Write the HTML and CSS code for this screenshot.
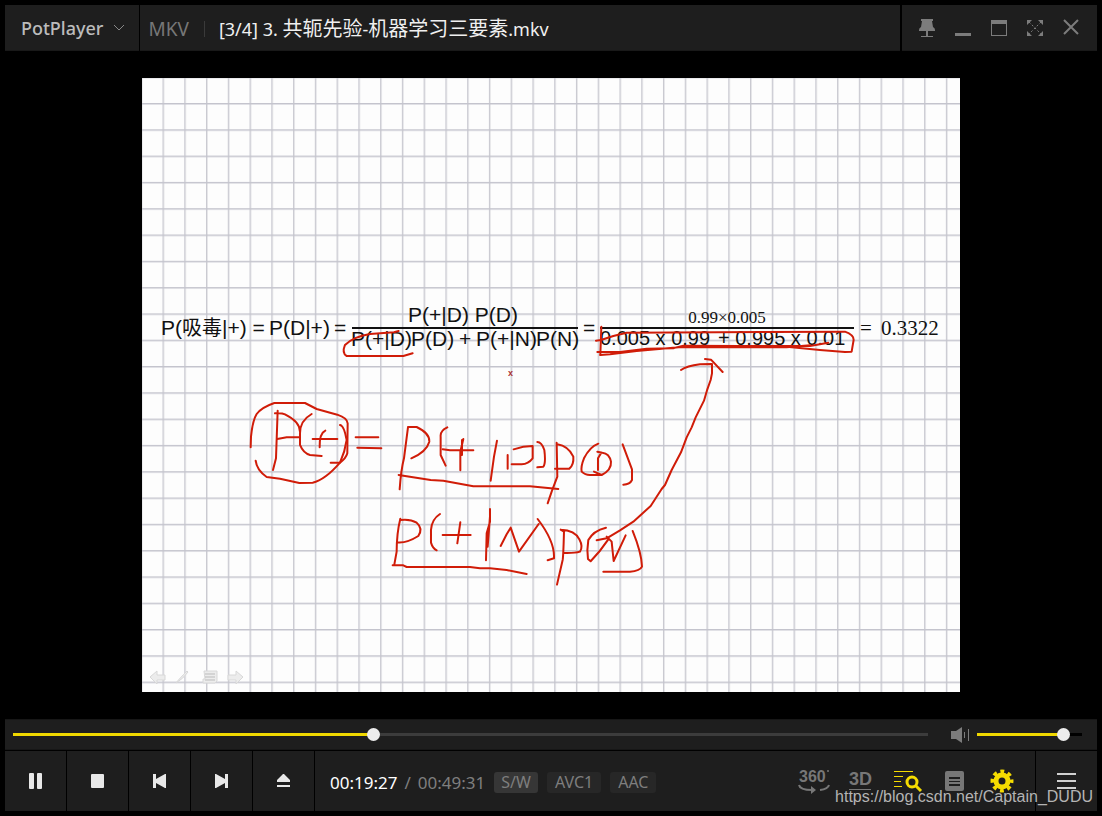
FILE: index.html
```html
<!DOCTYPE html>
<html lang="zh-CN">
<head>
<meta charset="utf-8">
<meta name="viewport" content="width=device-width, initial-scale=1">
<title>PotPlayer</title>
<link rel="stylesheet" href="styles.css">
</head>
<body>
<div class="player">
  <header class="titlebar">
    <button class="brand" type="button">
      <span>PotPlayer</span>
      <svg class="brand-arrow" viewBox="0 0 12 8" aria-hidden="true"><path d="M1 1l5 5 5-5"/></svg>
    </button>
    <div class="caption">
      <span class="format">MKV</span>
      <h1 class="filename">[3/4] 3. <span class="han">共轭先验</span>-<span class="han">机器学习三要素</span>.mkv</h1>
    </div>
    <div class="window-buttons">
      <button type="button" aria-label="Always on top"><svg viewBox="0 0 18 20"><path class="solid" d="M3 1h12v2h-1l1 6q2 1 2 3v1H1v-1q0-2 2-3l1-6H3zM8 13h2v5H8zM3 18h12v1H3z"/></svg></button>
      <button type="button" aria-label="Minimize"><svg viewBox="0 0 18 20"><path class="solid" d="M1 15h16v3H1z"/></svg></button>
      <button type="button" aria-label="Maximize"><svg viewBox="0 0 18 20"><path class="solid" fill-rule="evenodd" d="M1 2h16v16H1zM2 6v11h14V6z"/></svg></button>
      <button type="button" aria-label="Full screen"><svg viewBox="0 0 18 20"><path class="solid" d="M1 2h5L1 7zM17 2v5l-5-5zM1 18v-5l5 5zM17 18h-5l5-5z"/><path class="line dashed" d="M3 4l12 12M15 4L3 16"/></svg></button>
      <button type="button" aria-label="Close"><svg viewBox="0 0 18 20"><path class="line" d="M2 2l14 14M16 2L2 16"/></svg></button>
    </div>
  </header>

  <main class="video">
    <svg class="frame" viewBox="0 0 818 614" role="img" aria-label="共轭先验">
      <defs>
        <pattern id="grid" x="20.5" y="25" width="21.76" height="26.3" patternUnits="userSpaceOnUse">
          <path class="grid-line" d="M.75 0V26.3M0 .75H21.76"/>
        </pattern>
      </defs>
      <rect class="paper" width="818" height="614"/>
      <rect fill="url(#grid)" width="818" height="614"/>

      <g class="slide-nav">
        <path d="M8 599l7-6v4h8v5h-8v4z"/>
        <path d="M34 605q3-4 11-12l1 1q-5 7-12 11z"/>
        <path d="M62 593h13v10l-2 2H61v-4h2z"/>
        <path class="nav-lines" d="M63 596h10M63 599h10M63 602h10"/>
        <path d="M101 599l-7-6v4h-8v5h8v4z"/>
      </g>

      <g class="formula">
        <text x="19" y="257">P(<tspan class="hanzi">吸毒</tspan>|+) = <tspan x="127">P(D|+)</tspan><tspan x="192">=</tspan></text>
        <text x="266" y="244">P(+|D) P(D)</text>
        <text x="209" y="268">P(+|D)<tspan x="269">P(D)</tspan><tspan x="317">+</tspan><tspan x="334">P(+|N)</tspan><tspan x="394">P(N)</tspan></text>
        <text x="441" y="257">=</text>
        <text class="serif-small" x="585" y="245" text-anchor="middle">0.99×0.005</text>
        <text class="product" x="458" y="267">0.005 x 0.99 <tspan x="576">+ 0.995 x 0.01</tspan></text>
        <text class="serif" x="718" y="257">= <tspan x="739">0.3322</tspan></text>
        <path class="bar" d="M210 250H436M458 250H712"/>
        <text class="pointer" x="366" y="298">x</text>
      </g>

      <g class="ink">
        <g transform="translate(-2 212) scale(.3333)">
          <path d="M776 123L762 127L690 132Q640 140 615 165Q605 190 620 198H790L818 190"/>
        </g>
        <g transform="translate(358 212) scale(.3333)">
          <path d="M304 110L301 195M288 152L303 150L340 138L380 128L1035 125Q1062 135 1061 150L1055 185L1035 186L960 180L860 170"/>
          <path d="M292 186L360 186L440 176L520 175L550 167L720 168L930 168L985 158M301 195L330 193L410 183L545 171L860 172L930 166"/>
        </g>
        <g transform="translate(98 312) scale(.3333)">
          <path d="M32 172L33 140Q38 90 50 72Q65 52 103 39H195L230 57L292 74Q322 84 323 100L322 190Q318 205 300 218Q255 270 218 278L178 279L120 266L80 261Q50 240 47 212"/>
          <path d="M113 62L108 205L99 240M105 70Q125 68 135 73Q180 95 180 125M112 147L140 142H180"/>
          <path d="M215 72Q180 92 180 130V165Q190 190 210 195L245 198M218 147H292M256 122Q238 130 239 172M300 105Q312 106 320 150Q315 185 300 218H272"/>
          <path d="M347 142H415M352 173L424 175"/>
          <path d="M504 112Q498 160 492 205Q483 240 479 298M504 111H530Q570 130 568 155Q560 185 514 205"/>
          <path d="M622 112Q600 122 602 140V195L617 227M476 255L572 270L610 272L700 289H870L955 297"/>
          <path d="M481 386Q470 430 470 485L463 524M481 390Q510 386 530 398Q550 415 535 438Q500 460 472 457"/>
          <path d="M600 372Q575 388 573 420V458Q578 475 590 481M608 435H692M661 397L652 460M458 526H490L500 531H690L720 535H750L800 540L860 552"/>
        </g>
        <g transform="translate(298 312) scale(.3333)">
          <path d="M8 178L30 181H100M70 147L61 185V241M66 150V195M171 152L162 200L152 272"/>
          <path d="M203 195V236M221 178Q250 168 278 168V205Q265 222 245 223H215M292 156Q305 156 313 180Q318 220 310 230L292 232"/>
          <path d="M350 158L352 260L335 305L323 340M352 163Q385 168 400 200Q402 225 388 236H345"/>
          <path d="M475 161Q450 170 432 205Q422 230 425 245Q435 255 450 255H485Q515 240 513 215Q508 190 487 188L472 185M483 190L474 205V240M462 245L485 255M548 163L576 238V270Q570 283 550 284"/>
          <path d="M150 357V395L140 430L138 511M150 380L143 470M182 468L200 433L212 413L237 485L296 402M293 387Q345 455 342 505L323 511"/>
          <path d="M362 419L372 425Q370 500 368 510L351 584M362 419Q405 420 418 448Q430 470 420 485Q405 490 370 489"/>
          <path d="M498 413Q460 422 445 450Q440 480 444 507L452 514Q480 485 505 448M500 440L515 455L521 513L557 436M578 423Q605 490 606 530Q600 543 570 545H490"/>
        </g>
        <g transform="translate(458 262) scale(.3333)">
          <path d="M-10 601L20 595L60 571L100 545L152 498L185 447L195 435L215 390L243 337L260 292L275 262L287 232L312 182L322 148L332 120L336 100V72L300 73Q260 78 243 90M315 57L333 59L368 96"/>
        </g>
      </g>
    </svg>
  </main>

  <section class="seek-row">
    <input class="slider seek" type="range" aria-label="Position" min="0" max="2971" value="1167" style="--fill: 39.3%">
    <button class="speaker" type="button" aria-label="Mute"><svg viewBox="0 0 20 16"><path d="M1 4h5l6-4v16l-6-4H1z"/><path class="wave" d="M14.500 5v6M18.500 2v12"/></svg></button>
    <input class="slider volume" type="range" aria-label="Volume" min="0" max="100" value="87" style="--fill: 84%">
  </section>

  <footer class="controls">
    <div class="transport">
      <button type="button" aria-label="Pause"><svg viewBox="0 0 16 16"><rect x="1" y="0" width="5" height="16" rx="1"/><rect x="9" y="0" width="5" height="16" rx="1"/></svg></button>
      <button type="button" aria-label="Stop"><svg viewBox="0 0 16 16"><rect x="1" y="1" width="13" height="14" rx="1"/></svg></button>
      <button type="button" aria-label="Previous"><svg viewBox="0 0 16 16"><path d="M1 1h3v5l9-5h1v14h-1l-9-5v5H1z"/></svg></button>
      <button type="button" aria-label="Next"><svg viewBox="0 0 16 16"><path d="M14 1h-3v5L2 1H1v14h1l9-5v5h3z"/></svg></button>
      <button type="button" aria-label="Open"><svg viewBox="0 0 16 16"><path d="M7 1h1l6 6v2H1V7zM1 12h13v2H1z"/></svg></button>
    </div>
    <div class="status">
      <p class="time"><span class="elapsed">00:19:27</span><span>/</span><span>00:49:31</span></p>
      <button class="tag tag-active" type="button">S/W</button>
      <button class="tag" type="button">AVC1</button>
      <button class="tag" type="button">AAC</button>
    </div>
    <div class="tools">
      <button type="button" aria-label="360 degree video"><svg viewBox="0 0 32 28"><text class="label-360" x="1" y="15">360</text><circle cx="30" cy="4" r="1"/><path class="arc" d="M1 18q1 5 13 5M31 18q-1 4-9 5"/><path d="M13 19l5 4-5 4z"/></svg></button>
      <button type="button" aria-label="3D video"><svg viewBox="0 0 32 28"><text class="label-3d" x="4" y="18">3D</text><path d="M4 22h22v1H4z"/></svg></button>
      <button class="lit" type="button" aria-label="Playlist search"><svg viewBox="0 0 32 28"><path class="thin" d="M2 4.500h19M2 9.500h9M2 14.500h7M2 19.500h8"/><circle class="ring" cx="20" cy="15" r="5"/><path class="handle" d="M24 19l5 5"/></svg></button>
      <button type="button" aria-label="Playlist"><svg viewBox="0 0 32 28"><path fill-rule="evenodd" d="M8 4h15q2 0 2 2v16q0 2-2 2H8q-2 0-2-2V6q0-2 2-2zM10 10v2h11v-2zM10 14v1h11v-1zM10 17v2h11v-2z"/></svg></button>
      <button class="lit" type="button" aria-label="Preferences"><svg viewBox="0 0 32 28"><circle class="teeth" cx="16" cy="14" r="9"/><circle class="gear-ring" cx="16" cy="14" r="6"/></svg></button>
    </div>
    <button class="menu" type="button" aria-label="Menu"><svg viewBox="0 0 20 18"><path d="M0 1h19v2H0zM0 8h19v2H0zM0 15h19v2H0z"/></svg></button>
  </footer>
  <a class="watermark" href="https://blog.csdn.net/Captain_DUDU">https://blog.csdn.net/Captain_DUDU</a>
</div>
</body>
</html>
```

FILE: styles.css
```css
* {
  box-sizing: border-box;
}

body {
  margin: 0;
  background: #000;
  color: #7e7e7e;
  font-family: "Noto Sans", "Noto Sans CJK SC", sans-serif;
}

button {
  margin: 0;
  padding: 0;
  border: 0;
  background: none;
  color: inherit;
  font: inherit;
  cursor: pointer;
}

svg {
  display: block;
}

.player {
  position: relative;
  display: grid;
  grid-template-columns: minmax(0, 1fr);
  grid-template-rows: auto minmax(0, 1fr) auto auto;
  height: 100vh;
  padding: 5px;
}

/* Title bar */
.titlebar {
  display: flex;
  height: 46px;
}

.brand,
.caption,
.window-buttons {
  display: flex;
  align-items: center;
  background: #1e1e1e;
  border-bottom: 1px solid #191919;
}

.brand {
  gap: 10px;
  padding: 0 14px 0 16px;
  margin-right: 1px;
  color: #bcbcbc;
  font-size: 18px;
  font-weight: 500;
}

.brand-arrow {
  width: 12px;
  height: 8px;
  fill: none;
  stroke: #888;
}

.caption {
  flex: 1;
  min-width: 0;
  padding: 2px 8px 0;
  font-size: 19px;
}

.format {
  flex: none;
  padding-right: 15px;
  margin-right: 14px;
  border-right: 1px solid #3a3a3a;
  color: #777;
  line-height: 16px;
}

.filename {
  margin: 0;
  overflow: hidden;
  color: #f0f0f0;
  font-size: 18px;
  font-weight: 400;
  line-height: 30px;
  white-space: nowrap;
  text-overflow: ellipsis;
}

.han {
  font-size: 20px;
}

.window-buttons {
  margin-left: 2px;
  padding: 0 8px 0 7px;
}

.window-buttons button {
  display: grid;
  place-items: center;
  width: 36px;
  height: 45px;
}

.window-buttons svg {
  width: 18px;
  height: 20px;
}

.solid {
  fill: #7c7c7c;
}

.line {
  fill: none;
  stroke: #7c7c7c;
  stroke-width: 2;
}

.dashed {
  stroke-width: 1;
  stroke-dasharray: 2 2;
}

/* Picture */
.video {
  display: grid;
  grid-template-rows: minmax(0, 1fr);
  min-height: 0;
  padding: 27px 0;
}

.frame {
  width: 100%;
  height: 100%;
}

.paper {
  fill: #fdfdfd;
}

.grid-line {
  fill: none;
  stroke: #c4c4cd;
  stroke-width: 1.3;
}

.slide-nav {
  fill: #ececec;
  stroke: #d8d8d8;
}

.slide-nav .nav-lines {
  stroke: #bbb;
}

.formula {
  fill: #111;
  font-family: "Liberation Sans", "Noto Sans CJK SC", sans-serif;
  font-size: 21px;
}

.hanzi,
.product {
  font-size: 20px;
}

.serif,
.serif-small {
  font-family: "Liberation Serif", serif;
  font-size: 21px;
}

.serif-small {
  font-size: 17px;
}

.bar {
  stroke: #111;
  stroke-width: 2;
}

.pointer {
  fill: #a33;
  font-size: 9px;
  font-weight: 700;
}

.ink {
  fill: none;
  stroke: #d01c08;
  stroke-width: 6;
  stroke-linecap: round;
  stroke-linejoin: round;
}

/* Position and volume */
.seek-row {
  display: flex;
  align-items: center;
  height: 31px;
  padding: 0 15px 0 8px;
  background: #1e1e1e;
  border-top: 1px solid #171717;
  border-bottom: 1px solid #171717;
}

.slider {
  --rest: #3c3c3c;
  height: 13px;
  margin: 0;
  appearance: none;
  background: linear-gradient(#f0d800, #f0d800) 0 50% / var(--fill) 3px no-repeat,
    linear-gradient(var(--rest), var(--rest)) 0 50% / 100% 3px no-repeat;
}

.slider::-webkit-slider-thumb {
  width: 13px;
  height: 13px;
  appearance: none;
  border-radius: 50%;
  background: #ececec;
}

.seek {
  flex: 1;
  min-width: 0;
}

.volume {
  --rest: #000;
  width: 105px;
}

.speaker {
  margin: 0 7px 0 22px;
}

.speaker svg {
  width: 20px;
  height: 16px;
  fill: #7c7c7c;
}

.wave {
  stroke: #7c7c7c;
}

/* Bottom controls */
.controls {
  display: flex;
  height: 60px;
  margin-top: 1px;
  background: #1e1e1e;
}

.transport {
  display: flex;
}

.transport button {
  display: grid;
  place-items: center;
  width: 62px;
  border-right: 1px solid #000;
}

.transport svg {
  width: 16px;
  height: 16px;
  fill: #e8e8e8;
}

.status {
  flex: 1;
  display: flex;
  align-items: center;
  gap: 9px;
  padding: 3px 0 0 15px;
  font-size: 16px;
  white-space: nowrap;
}

.time {
  display: flex;
  gap: 7px;
  margin: 0;
  font-size: 17px;
}

.elapsed {
  color: #fff;
}

.tag {
  height: 21px;
  padding: 0 8px;
  border-radius: 3px;
  background: #272727;
  line-height: 21px;
}

.tag-active {
  padding: 0 7px;
  background: #363636;
}

.tools {
  display: flex;
  align-items: center;
  gap: 15px;
  padding-right: 17px;
}

.tools svg {
  width: 32px;
  height: 28px;
  fill: #777;
  stroke: none;
}

.tools text {
  font-family: "Liberation Sans", sans-serif;
  font-weight: 700;
}

.label-360 {
  font-size: 16px;
}

.label-3d {
  font-size: 18px;
}

.tools .thin,
.tools .arc {
  fill: none;
  stroke: #777;
}

.tools .arc {
  stroke-width: 2;
}

.tools .lit svg {
  fill: #f5dc00;
}

.tools .lit .thin {
  stroke: #f5dc00;
}

.ring,
.gear-ring,
.teeth,
.handle {
  fill: none;
  stroke: #f5dc00;
  stroke-width: 3;
}

.gear-ring {
  stroke-width: 5;
}

.teeth {
  stroke-width: 5;
  stroke-dasharray: 3.600 3.469;
  stroke-dashoffset: 1.800;
}

.menu {
  display: grid;
  place-items: center;
  width: 62px;
  border-left: 1px solid #000;
}

.menu svg {
  width: 20px;
  height: 18px;
  fill: #d0d0d0;
}

.watermark {
  position: absolute;
  right: 9px;
  bottom: 9px;
  color: #b4b4b4;
  font-family: "Liberation Sans", sans-serif;
  font-size: 16px;
  line-height: 20px;
  text-decoration: none;
}
```
